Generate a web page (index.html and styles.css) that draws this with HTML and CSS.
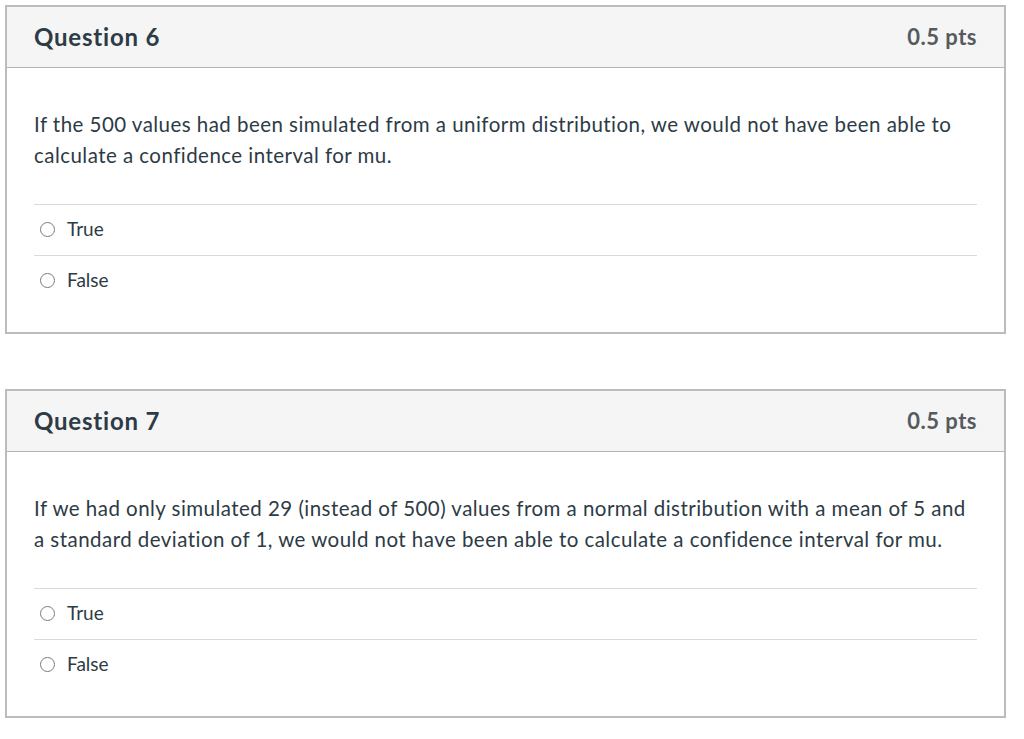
FILE: index.html
```html
<!DOCTYPE html>
<html>
<head>
<meta charset="utf-8">
<link rel="stylesheet" href="styles.css">
</head>
<body>
<div class="page">
  <div class="question">
    <div class="q-header">
      <h2 class="q-title">Question 6</h2>
      <span class="q-points">0.5 pts</span>
    </div>
    <div class="q-body">
      <p class="q-text">If the 500 values had been simulated from a uniform distribution, we would not have been able to calculate a confidence interval for mu.</p>
      <div class="answers">
        <label class="answer"><span class="radio"></span><span class="label">True</span></label>
        <label class="answer"><span class="radio"></span><span class="label">False</span></label>
      </div>
    </div>
  </div>
  <div class="question">
    <div class="q-header">
      <h2 class="q-title">Question 7</h2>
      <span class="q-points">0.5 pts</span>
    </div>
    <div class="q-body">
      <p class="q-text">If we had only simulated 29 (instead of 500) values from a normal distribution with a mean of 5 and a standard deviation of 1, we would not have been able to calculate a confidence interval for mu.</p>
      <div class="answers">
        <label class="answer"><span class="radio"></span><span class="label">True</span></label>
        <label class="answer"><span class="radio"></span><span class="label">False</span></label>
      </div>
    </div>
  </div>
</div>
</body>
</html>
```
FILE: styles.css
```css
html, body {
  margin: 0;
  padding: 0;
  background: #ffffff;
}
body {
  font-family: Lato, "Open Sans", "Liberation Sans", sans-serif;
  color: #2d3b45;
}
.page {
  padding: 5px 0 0 5px;
  width: 1001px;
  display: flex;
  flex-direction: column;
  gap: 55px;
}
.question {
  border: 2px solid #bcbcbc;
  background: #fff;
}
.q-header {
  display: flex;
  align-items: center;
  justify-content: space-between;
  padding: 0 27px 1px 27px;
  box-sizing: border-box;
  height: 61px;
  background: #f5f5f5;
  border-bottom: 1px solid #b5b5b5;
}
.q-title {
  margin: 0;
  font-size: 24px;
  letter-spacing: 0.8px;
  font-weight: 700;
  color: #2d3b45;
}
.q-points {
  font-size: 22px;
  letter-spacing: 0.5px;
  font-weight: 700;
  color: #555a5e;
}
.q-body {
  padding: 41px 27px 26px 27px;
}
.q-text {
  margin: 0;
  font-size: 20.5px;
  letter-spacing: 0.46px;
  line-height: 31px;
}
.answers {
  margin-top: 33px;
  display: flex;
  flex-direction: column;
}
.answer {
  display: flex;
  align-items: center;
  gap: 12px;
  height: 46px;
  padding-left: 6px;
  padding-bottom: 4px;
  box-sizing: content-box;
  border-top: 1px solid #dadada;
  font-size: 19px;
}
.radio {
  width: 15px;
  height: 15px;
  margin-top: 2px;
  border: 1.5px solid #7b7b7b;
  border-radius: 50%;
  box-sizing: border-box;
  background: #fff;
}
.label {
  color: #2d3b45;
}
```
